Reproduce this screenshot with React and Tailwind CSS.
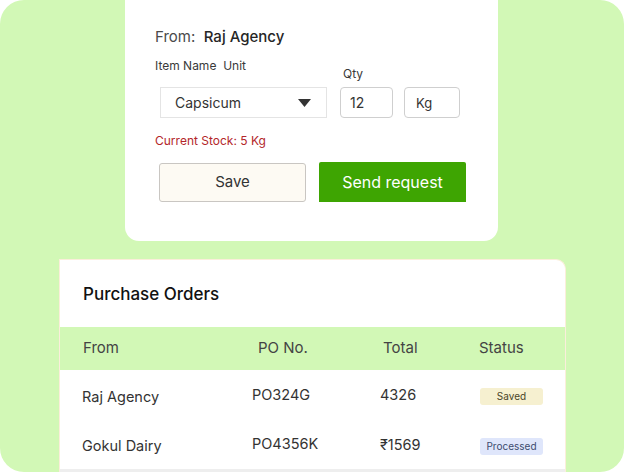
import React from "react";

const font = { fontFamily: "Inter, 'Noto Sans', sans-serif" };

const rows = [
  { from: "Raj Agency", po: "PO324G", total: "4326", status: "Saved" },
  { from: "Gokul Dairy", po: "PO4356K", total: "₹1569", status: "Processed" },
];

function Badge({ status }) {
  const saved = status === "Saved";
  return (
    <span
      className={
        "flex h-[17px] w-[63px] items-center justify-center rounded-[3px] text-[10px] " +
        (saved ? "bg-[#f6f0d0] text-[#4a4428]" : "bg-[#dfe6fb] text-[#3d4b6e]")
      }
    >
      {status}
    </span>
  );
}

export default function App() {
  return (
    <div className="h-[472px] w-[624px] overflow-hidden bg-white" style={font}>
      <div className="flex h-full w-full flex-col rounded-[24px] bg-[#d2f8b6]">
        {/* REQUEST FORM CARD */}
        <div className="ml-[125px] h-[241px] w-[373px] rounded-b-[14px] bg-white pl-[30px] pt-[27px]">
          <div className="text-[15px] leading-[20px] text-[#4a4a4a]">
            From:&nbsp; <span className="font-medium text-[#262626]">Raj Agency</span>
          </div>

          <div className="mt-[11px] flex items-end">
            <div>
              <div className="text-[12px] leading-[16px] text-[#3a3a3a]">Item Name&nbsp; Unit</div>
              <div className="ml-[5px] mt-[13px] flex h-[31px] w-[167px] items-center justify-between border border-[#e4e4e4] bg-white pl-[14px] pr-[15px]">
                <span className="text-[14px] text-[#333]">Capsicum</span>
                <svg width="13" height="8" viewBox="0 0 13 8">
                  <path d="M0 0h13L6.5 8z" fill="#333" />
                </svg>
              </div>
            </div>
            <div className="ml-[13px]">
              <div className="pl-[3px] text-[12px] leading-[16px] text-[#3a3a3a]">Qty</div>
              <div className="mt-[5px] flex h-[31px] w-[53px] items-center rounded-[4px] border border-[#cfcfcf] pl-[9px] text-[14px] text-[#333]">
                12
              </div>
            </div>
            <div className="ml-[11px] flex h-[31px] w-[56px] items-center rounded-[4px] border border-[#cfcfcf] pl-[11px] pt-[2px] text-[13px] text-[#333]">
              Kg
            </div>
          </div>

          <div className="mt-[15px] text-[12px] leading-[16px] text-[#b3262a]">Current Stock: 5 Kg</div>

          <div className="mt-[13px] flex items-end">
            <button className="ml-[4px] h-[39px] w-[147px] rounded-[3px] border border-[#c9c6c2] bg-[#fdfaf3] text-[15px] text-[#333]">
              Save
            </button>
            <button className="ml-[13px] h-[40px] w-[147px] rounded-t-[2px] bg-[#3ea502] text-[16px] text-white">
              Send request
            </button>
          </div>
        </div>

        {/* PURCHASE ORDERS CARD */}
        <div className="ml-[59px] mt-[18px] flex w-[507px] flex-1 flex-col rounded-tr-[10px] border-x-[1.5px] border-t-[1.5px] border-[#fbeedb] bg-white">
          <div className="pl-[23px] pt-[23px] text-[17px] font-medium leading-[22px] text-[#111]">Purchase Orders</div>

          <div className="mt-[22px] flex h-[43px] items-center bg-[#d2f8b6] text-[15px] text-[#444]">
            <span className="w-[198px] pl-[23px]">From</span>
            <span className="w-[125px]">PO No.</span>
            <span className="w-[96px]">Total</span>
            <span>Status</span>
          </div>

          {rows.map((r, i) => (
            <div
              key={r.po}
              className={"flex items-center text-[14.5px] text-[#333] " + (i === 0 ? "h-[53px]" : "h-[49px] border-b-[3px] border-[#eeeeee]")}
            >
              <span className="w-[192px] pl-[22px]">{r.from}</span>
              <span className="-mt-[4px] w-[128px]">{r.po}</span>
              <span className="-mt-[3px] w-[100px]">{r.total}</span>
              <Badge status={r.status} />
            </div>
          ))}
        </div>
      </div>
    </div>
  );
}
